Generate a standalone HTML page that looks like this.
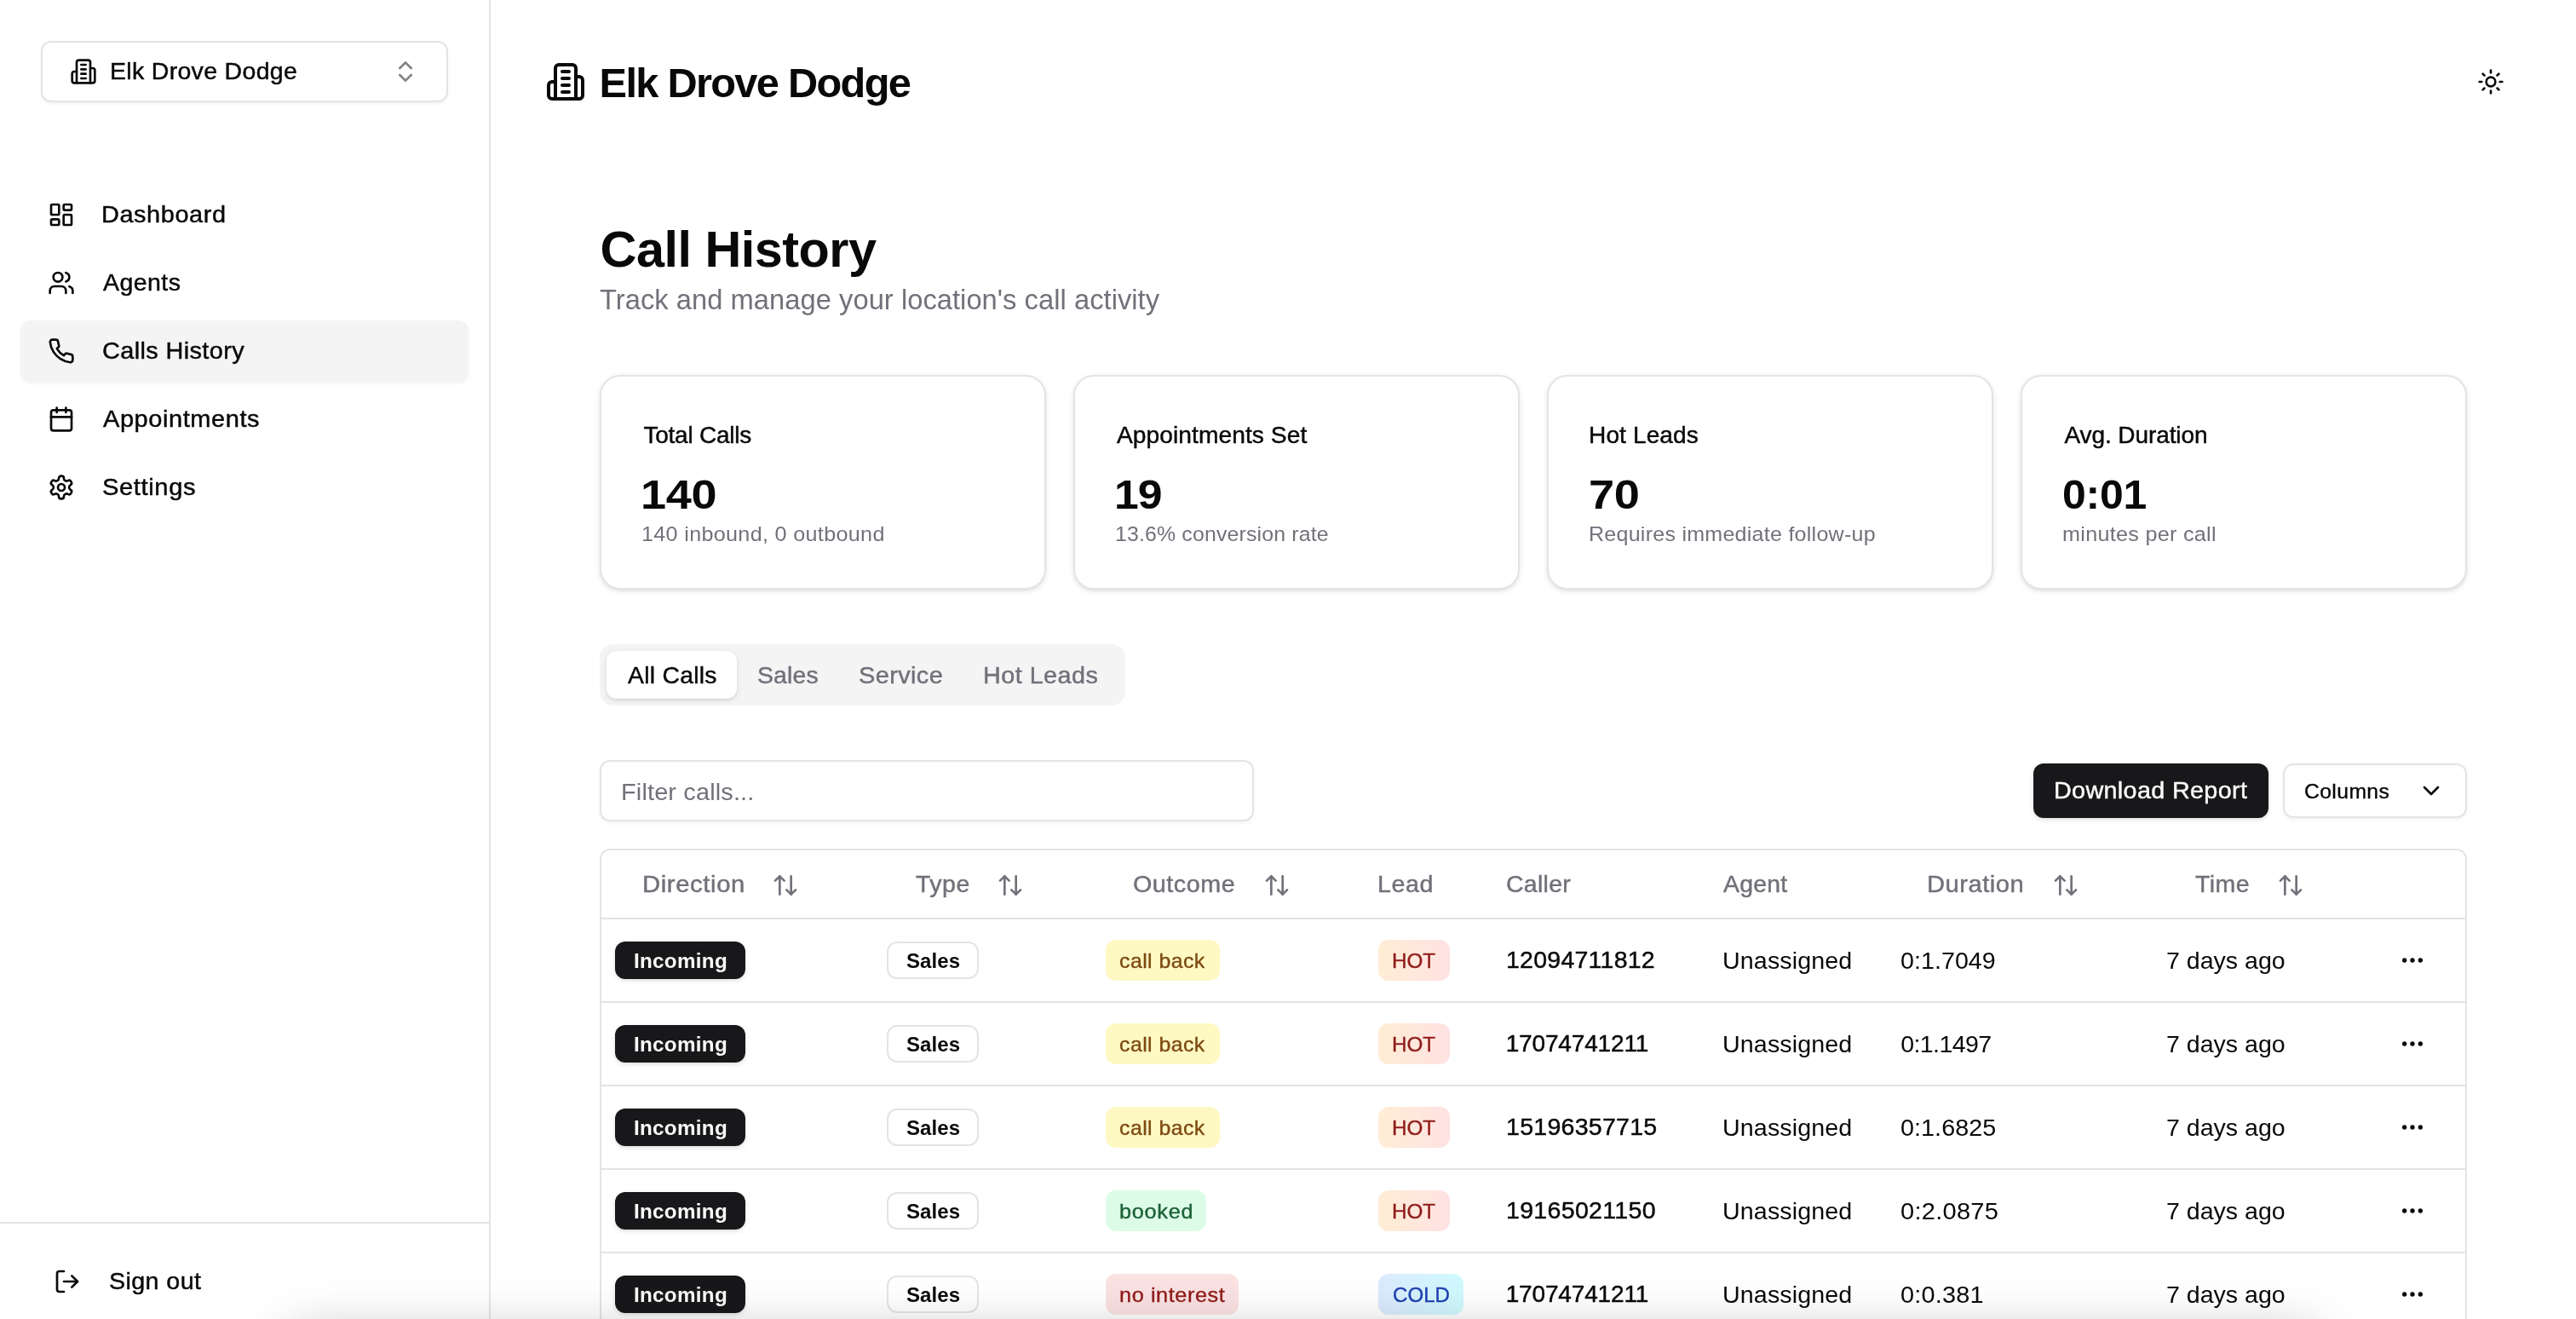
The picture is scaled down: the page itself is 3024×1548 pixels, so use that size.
<!DOCTYPE html>
<html lang="en"><head><meta charset="utf-8"><title>Call History - Elk Drove Dodge</title>
<style>
html,body{margin:0;padding:0;}
body{width:3024px;height:1548px;overflow:hidden;background:#fff;position:relative;
font-family:"Liberation Sans",sans-serif;color:#09090b;-webkit-font-smoothing:antialiased;}
.app{position:absolute;left:0;top:0;width:3024px;height:1548px;overflow:hidden;will-change:transform;}
.g{position:absolute;left:0;top:0;width:0;height:0;margin:0;padding:0;}
.bx{position:absolute;box-sizing:border-box;}
.t{position:absolute;white-space:nowrap;margin:0;padding:0;font-weight:400;font-family:"Liberation Sans",sans-serif;}
.ic{position:absolute;display:block;overflow:visible;}
</style></head><body><div class="app">
<aside class="g" aria-label="Sidebar">
<div class="bx" style="left:574px;top:0px;width:2px;height:1548px;background:#e4e4e7;"></div>
<div class="bx" style="left:48px;top:48px;width:478px;height:72px;border:2px solid #e4e4e7;border-radius:12px;background:#fff;box-shadow:0 2px 4px rgba(0,0,0,0.05);"></div>
<svg class="ic" style="left:82px;top:68px;width:32px;height:32px;color:#09090b;" viewBox="0 0 24 24" fill="none" stroke="currentColor" stroke-width="2" stroke-linecap="round" stroke-linejoin="round"><path d="M6 22V4a2 2 0 0 1 2-2h8a2 2 0 0 1 2 2v18Z"/><path d="M6 12H4a2 2 0 0 0-2 2v6a2 2 0 0 0 2 2h2"/><path d="M18 9h2a2 2 0 0 1 2 2v9a2 2 0 0 1-2 2h-2"/><path d="M10 6h4"/><path d="M10 10h4"/><path d="M10 14h4"/><path d="M10 18h4"/></svg>
<svg class="ic" style="left:460px;top:68px;width:32px;height:32px;color:#09090b;opacity:0.5;" viewBox="0 0 24 24" fill="none" stroke="currentColor" stroke-width="2" stroke-linecap="round" stroke-linejoin="round"><path d="m7 15 5 5 5-5"/><path d="m7 9 5-5 5 5"/></svg>
<div class="bx" style="left:24px;top:376px;width:526px;height:72px;background:#f4f4f5;border-radius:12px;box-shadow:0 2px 4px rgba(0,0,0,0.05);"></div>
<svg class="ic" style="left:56px;top:236px;width:32px;height:32px;color:#09090b;" viewBox="0 0 24 24" fill="none" stroke="currentColor" stroke-width="2" stroke-linecap="round" stroke-linejoin="round"><rect width="7" height="9" x="3" y="3" rx="1"/><rect width="7" height="5" x="14" y="3" rx="1"/><rect width="7" height="9" x="14" y="12" rx="1"/><rect width="7" height="5" x="3" y="16" rx="1"/></svg>
<svg class="ic" style="left:56px;top:316px;width:32px;height:32px;color:#09090b;" viewBox="0 0 24 24" fill="none" stroke="currentColor" stroke-width="2" stroke-linecap="round" stroke-linejoin="round"><path d="M16 21v-2a4 4 0 0 0-4-4H6a4 4 0 0 0-4 4v2"/><circle cx="9" cy="7" r="4"/><path d="M22 21v-2a4 4 0 0 0-3-3.87"/><path d="M16 3.13a4 4 0 0 1 0 7.75"/></svg>
<svg class="ic" style="left:56px;top:396px;width:32px;height:32px;color:#09090b;" viewBox="0 0 24 24" fill="none" stroke="currentColor" stroke-width="2" stroke-linecap="round" stroke-linejoin="round"><path d="M22 16.92v3a2 2 0 0 1-2.18 2 19.79 19.79 0 0 1-8.63-3.07 19.5 19.5 0 0 1-6-6 19.79 19.79 0 0 1-3.07-8.67A2 2 0 0 1 4.11 2h3a2 2 0 0 1 2 1.72 12.84 12.84 0 0 0 .7 2.81 2 2 0 0 1-.45 2.11L8.09 9.91a16 16 0 0 0 6 6l1.27-1.27a2 2 0 0 1 2.11-.45 12.84 12.84 0 0 0 2.81.7A2 2 0 0 1 22 16.92z"/></svg>
<svg class="ic" style="left:56px;top:476px;width:32px;height:32px;color:#09090b;" viewBox="0 0 24 24" fill="none" stroke="currentColor" stroke-width="2" stroke-linecap="round" stroke-linejoin="round"><path d="M8 2v4"/><path d="M16 2v4"/><rect width="18" height="18" x="3" y="4" rx="2"/><path d="M3 10h18"/></svg>
<svg class="ic" style="left:56px;top:556px;width:32px;height:32px;color:#09090b;" viewBox="0 0 24 24" fill="none" stroke="currentColor" stroke-width="2" stroke-linecap="round" stroke-linejoin="round"><path d="M12.22 2h-.44a2 2 0 0 0-2 2v.18a2 2 0 0 1-1 1.73l-.43.25a2 2 0 0 1-2 0l-.15-.08a2 2 0 0 0-2.73.73l-.22.38a2 2 0 0 0 .73 2.73l.15.1a2 2 0 0 1 1 1.72v.51a2 2 0 0 1-1 1.74l-.15.09a2 2 0 0 0-.73 2.73l.22.38a2 2 0 0 0 2.73.73l.15-.08a2 2 0 0 1 2 0l.43.25a2 2 0 0 1 1 1.73V20a2 2 0 0 0 2 2h.44a2 2 0 0 0 2-2v-.18a2 2 0 0 1 1-1.73l.43-.25a2 2 0 0 1 2 0l.15.08a2 2 0 0 0 2.73-.73l.22-.39a2 2 0 0 0-.73-2.73l-.15-.08a2 2 0 0 1-1-1.74v-.5a2 2 0 0 1 1-1.74l.15-.09a2 2 0 0 0 .73-2.73l-.22-.38a2 2 0 0 0-2.73-.73l-.15.08a2 2 0 0 1-2 0l-.43-.25a2 2 0 0 1-1-1.73V4a2 2 0 0 0-2-2z"/><circle cx="12" cy="12" r="3"/></svg>
<div class="bx" style="left:0px;top:1434px;width:574px;height:2px;background:#e4e4e7;"></div>
<svg class="ic" style="left:63.40px;top:1488px;width:32px;height:32px;color:#09090b;" viewBox="0 0 24 24" fill="none" stroke="currentColor" stroke-width="2" stroke-linecap="round" stroke-linejoin="round"><path d="M9 21H5a2 2 0 0 1-2-2V5a2 2 0 0 1 2-2h4"/><polyline points="16 17 21 12 16 7"/><line x1="21" x2="9" y1="12" y2="12"/></svg>
<span class="t" style="left:128.80px;top:64.30px;line-height:40px;font-size:28px;color:#09090b;-webkit-text-stroke:0.45px currentColor;letter-spacing:0.309px;transform:scaleX(1.0177);transform-origin:0 50%;">Elk Drove Dodge</span>
<span class="t" style="left:118.80px;top:232.30px;line-height:40px;font-size:28px;color:#09090b;-webkit-text-stroke:0.45px currentColor;letter-spacing:0.557px;transform:scaleX(1.0321);transform-origin:0 50%;">Dashboard</span>
<span class="t" style="left:120.80px;top:312.30px;line-height:40px;font-size:28px;color:#09090b;-webkit-text-stroke:0.45px currentColor;letter-spacing:0.432px;transform:scaleX(1.0184);transform-origin:0 50%;">Agents</span>
<span class="t" style="left:119.80px;top:392.30px;line-height:40px;font-size:28px;color:#09090b;-webkit-text-stroke:0.45px currentColor;letter-spacing:0.372px;transform:scaleX(1.0308);transform-origin:0 50%;">Calls History</span>
<span class="t" style="left:120.80px;top:472.30px;line-height:40px;font-size:28px;color:#09090b;-webkit-text-stroke:0.45px currentColor;letter-spacing:0.544px;transform:scaleX(1.0357);transform-origin:0 50%;">Appointments</span>
<span class="t" style="left:119.80px;top:552.30px;line-height:40px;font-size:28px;color:#09090b;-webkit-text-stroke:0.45px currentColor;letter-spacing:0.576px;transform:scaleX(1.0410);transform-origin:0 50%;">Settings</span>
<span class="t" style="left:128.40px;top:1483.90px;line-height:40px;font-size:28px;color:#09090b;-webkit-text-stroke:0.45px currentColor;letter-spacing:0.391px;transform:scaleX(1.0235);transform-origin:0 50%;">Sign out</span>
</aside>
<header class="g">
<svg class="ic" style="left:640px;top:72px;width:48px;height:48px;color:#09090b;" viewBox="0 0 24 24" fill="none" stroke="currentColor" stroke-width="2" stroke-linecap="round" stroke-linejoin="round"><path d="M6 22V4a2 2 0 0 1 2-2h8a2 2 0 0 1 2 2v18Z"/><path d="M6 12H4a2 2 0 0 0-2 2v6a2 2 0 0 0 2 2h2"/><path d="M18 9h2a2 2 0 0 1 2 2v9a2 2 0 0 1-2 2h-2"/><path d="M10 6h4"/><path d="M10 10h4"/><path d="M10 14h4"/><path d="M10 18h4"/></svg>
<svg class="ic" style="left:2908px;top:80px;width:32px;height:32px;color:#09090b;" viewBox="0 0 24 24" fill="none" stroke="currentColor" stroke-width="2" stroke-linecap="round" stroke-linejoin="round"><circle cx="12" cy="12" r="4"/><path d="M12 2v2"/><path d="M12 20v2"/><path d="m4.93 4.93 1.41 1.41"/><path d="m17.66 17.66 1.41 1.41"/><path d="M2 12h2"/><path d="M20 12h2"/><path d="m6.34 17.66-1.41 1.41"/><path d="m19.07 4.93-1.41 1.41"/></svg>
<h1 class="t" style="left:703.60px;top:62.92px;line-height:68px;font-size:48.72px;color:#09090b;font-weight:700;letter-spacing:-1.686px;">Elk Drove Dodge</h1>
</header>
<section class="g" aria-label="Page title">
<h2 class="t" style="left:704.50px;top:250.62px;line-height:84px;font-size:59.40px;color:#09090b;font-weight:700;letter-spacing:-0.509px;">Call History</h2>
<p class="t" style="left:704.10px;top:329.49px;line-height:46px;font-size:32.64px;color:#71717a;letter-spacing:0.035px;transform:scaleX(1.0020);transform-origin:0 50%;">Track and manage your location's call activity</p>
</section>
<section class="g" aria-label="Statistics">
<div class="bx" style="left:704px;top:440px;width:524px;height:252px;border:2px solid #e4e4e7;border-radius:24px;background:#fff;box-shadow:0 2px 6px rgba(0,0,0,0.1),0 2px 4px -2px rgba(0,0,0,0.1);"></div>
<div class="bx" style="left:1260px;top:440px;width:524px;height:252px;border:2px solid #e4e4e7;border-radius:24px;background:#fff;box-shadow:0 2px 6px rgba(0,0,0,0.1),0 2px 4px -2px rgba(0,0,0,0.1);"></div>
<div class="bx" style="left:1816px;top:440px;width:524px;height:252px;border:2px solid #e4e4e7;border-radius:24px;background:#fff;box-shadow:0 2px 6px rgba(0,0,0,0.1),0 2px 4px -2px rgba(0,0,0,0.1);"></div>
<div class="bx" style="left:2372px;top:440px;width:524px;height:252px;border:2px solid #e4e4e7;border-radius:24px;background:#fff;box-shadow:0 2px 6px rgba(0,0,0,0.1),0 2px 4px -2px rgba(0,0,0,0.1);"></div>
<span class="t" style="left:755.40px;top:490.90px;line-height:40px;font-size:28px;color:#09090b;-webkit-text-stroke:0.45px currentColor;letter-spacing:-0.220px;">Total Calls</span>
<span class="t" style="left:752.40px;top:545.62px;line-height:68px;font-size:48.72px;color:#09090b;font-weight:700;letter-spacing:-0.270px;transform:scaleX(1.1105);transform-origin:0 50%;">140</span>
<span class="t" style="left:753.40px;top:609.72px;line-height:34px;font-size:24.48px;color:#71717a;letter-spacing:0.309px;transform:scaleX(1.0281);transform-origin:0 50%;">140 inbound, 0 outbound</span>
<span class="t" style="left:1311.40px;top:490.90px;line-height:40px;font-size:28px;color:#09090b;-webkit-text-stroke:0.45px currentColor;letter-spacing:0.053px;transform:scaleX(1.0063);transform-origin:0 50%;">Appointments Set</span>
<span class="t" style="left:1308.40px;top:545.62px;line-height:68px;font-size:48.72px;color:#09090b;font-weight:700;letter-spacing:-0.942px;transform:scaleX(1.0612);transform-origin:0 50%;">19</span>
<span class="t" style="left:1309.40px;top:609.72px;line-height:34px;font-size:24.48px;color:#71717a;letter-spacing:0.167px;transform:scaleX(1.0154);transform-origin:0 50%;">13.6% conversion rate</span>
<span class="t" style="left:1865.40px;top:490.90px;line-height:40px;font-size:28px;color:#09090b;-webkit-text-stroke:0.45px currentColor;letter-spacing:0.100px;transform:scaleX(1.0032);transform-origin:0 50%;">Hot Leads</span>
<span class="t" style="left:1865.40px;top:545.62px;line-height:68px;font-size:48.72px;color:#09090b;font-weight:700;letter-spacing:-0.360px;transform:scaleX(1.1120);transform-origin:0 50%;">70</span>
<span class="t" style="left:1865.40px;top:609.72px;line-height:34px;font-size:24.48px;color:#71717a;letter-spacing:0.246px;transform:scaleX(1.0232);transform-origin:0 50%;">Requires immediate follow-up</span>
<span class="t" style="left:2423.40px;top:490.90px;line-height:40px;font-size:28px;color:#09090b;-webkit-text-stroke:0.45px currentColor;letter-spacing:-0.083px;">Avg. Duration</span>
<span class="t" style="left:2421.40px;top:545.62px;line-height:68px;font-size:48.72px;color:#09090b;font-weight:700;letter-spacing:-0.195px;transform:scaleX(1.0255);transform-origin:0 50%;">0:01</span>
<span class="t" style="left:2421.40px;top:609.72px;line-height:34px;font-size:24.48px;color:#71717a;letter-spacing:0.285px;transform:scaleX(1.0280);transform-origin:0 50%;">minutes per call</span>
</section>
<nav class="g" aria-label="Call filters" role="tablist">
<div class="bx" style="left:704px;top:756px;width:617px;height:72px;background:#f4f4f5;border-radius:16px;"></div>
<div class="bx" style="left:712px;top:764px;width:153px;height:56px;background:#fff;border-radius:12px;box-shadow:0 2px 6px rgba(0,0,0,0.1),0 2px 4px -2px rgba(0,0,0,0.1);"></div>
<span class="t" style="left:736.60px;top:772.70px;line-height:40px;font-size:28px;color:#09090b;-webkit-text-stroke:0.45px currentColor;letter-spacing:0.272px;transform:scaleX(1.0109);transform-origin:0 50%;">All Calls</span>
<span class="t" style="left:889.10px;top:772.70px;line-height:40px;font-size:28px;color:#71717a;-webkit-text-stroke:0.45px currentColor;letter-spacing:0.197px;transform:scaleX(1.0132);transform-origin:0 50%;">Sales</span>
<span class="t" style="left:1008.20px;top:772.70px;line-height:40px;font-size:28px;color:#71717a;-webkit-text-stroke:0.45px currentColor;letter-spacing:0.355px;transform:scaleX(1.0341);transform-origin:0 50%;">Service</span>
<span class="t" style="left:1154.30px;top:772.70px;line-height:40px;font-size:28px;color:#71717a;-webkit-text-stroke:0.45px currentColor;letter-spacing:0.462px;transform:scaleX(1.0272);transform-origin:0 50%;">Hot Leads</span>
</nav>
<section class="g" aria-label="Table toolbar">
<div class="bx" style="left:704px;top:892px;width:768px;height:72px;border:2px solid #e4e4e7;border-radius:12px;background:#fff;box-shadow:0 2px 4px rgba(0,0,0,0.05);"></div>
<div class="bx" style="left:2387px;top:896px;width:276px;height:64px;background:#18181b;border-radius:12px;box-shadow:0 2px 6px rgba(0,0,0,0.1),0 2px 4px -2px rgba(0,0,0,0.1);"></div>
<div class="bx" style="left:2680px;top:896px;width:216px;height:64px;border:2px solid #e4e4e7;border-radius:12px;background:#fff;box-shadow:0 2px 4px rgba(0,0,0,0.05);"></div>
<svg class="ic" style="left:2838px;top:912px;width:32px;height:32px;color:#09090b;" viewBox="0 0 24 24" fill="none" stroke="currentColor" stroke-width="2" stroke-linecap="round" stroke-linejoin="round"><path d="m6 9 6 6 6-6"/></svg>
<span class="t" style="left:728.80px;top:908.50px;line-height:40px;font-size:28.56px;color:#71717a;letter-spacing:0.141px;transform:scaleX(1.0135);transform-origin:0 50%;">Filter calls...</span>
<span class="t" style="left:2410.80px;top:908.30px;line-height:40px;font-size:28px;color:#fafafa;-webkit-text-stroke:0.45px currentColor;letter-spacing:0.348px;transform:scaleX(1.0257);transform-origin:0 50%;">Download Report</span>
<span class="t" style="left:2705px;top:912.48px;line-height:34px;font-size:24px;color:#09090b;-webkit-text-stroke:0.38px currentColor;letter-spacing:0.389px;transform:scaleX(1.0290);transform-origin:0 50%;">Columns</span>
</section>
<section class="g" aria-label="Calls table" role="table">
<div class="bx" style="left:704px;top:996px;width:2192px;height:600px;border:2px solid #e4e4e7;border-radius:12px;background:#fff;"></div>
<div class="bx" style="left:706px;top:1077px;width:2188px;height:2px;background:#e4e4e7;"></div>
<div class="bx" style="left:706px;top:1175px;width:2188px;height:2px;background:#e4e4e7;"></div>
<div class="bx" style="left:706px;top:1273px;width:2188px;height:2px;background:#e4e4e7;"></div>
<div class="bx" style="left:706px;top:1371px;width:2188px;height:2px;background:#e4e4e7;"></div>
<div class="bx" style="left:706px;top:1469px;width:2188px;height:2px;background:#e4e4e7;"></div>
<svg class="ic" style="left:905.60px;top:1022.60px;width:32px;height:32px;color:#71717a;" viewBox="0 0 24 24" fill="none" stroke="currentColor" stroke-width="2" stroke-linecap="round" stroke-linejoin="round"><path d="m21 16-4 4-4-4"/><path d="M17 20V4"/><path d="m3 8 4-4 4 4"/><path d="M7 4v16"/></svg>
<svg class="ic" style="left:1170.40px;top:1022.60px;width:32px;height:32px;color:#71717a;" viewBox="0 0 24 24" fill="none" stroke="currentColor" stroke-width="2" stroke-linecap="round" stroke-linejoin="round"><path d="m21 16-4 4-4-4"/><path d="M17 20V4"/><path d="m3 8 4-4 4 4"/><path d="M7 4v16"/></svg>
<svg class="ic" style="left:1482.80px;top:1022.60px;width:32px;height:32px;color:#71717a;" viewBox="0 0 24 24" fill="none" stroke="currentColor" stroke-width="2" stroke-linecap="round" stroke-linejoin="round"><path d="m21 16-4 4-4-4"/><path d="M17 20V4"/><path d="m3 8 4-4 4 4"/><path d="M7 4v16"/></svg>
<svg class="ic" style="left:2409.20px;top:1022.60px;width:32px;height:32px;color:#71717a;" viewBox="0 0 24 24" fill="none" stroke="currentColor" stroke-width="2" stroke-linecap="round" stroke-linejoin="round"><path d="m21 16-4 4-4-4"/><path d="M17 20V4"/><path d="m3 8 4-4 4 4"/><path d="M7 4v16"/></svg>
<svg class="ic" style="left:2672.80px;top:1022.60px;width:32px;height:32px;color:#71717a;" viewBox="0 0 24 24" fill="none" stroke="currentColor" stroke-width="2" stroke-linecap="round" stroke-linejoin="round"><path d="m21 16-4 4-4-4"/><path d="M17 20V4"/><path d="m3 8 4-4 4 4"/><path d="M7 4v16"/></svg>
<div class="bx" style="left:722px;top:1105px;width:153px;height:44px;background:#18181b;border-radius:12px;box-shadow:0 2px 6px rgba(0,0,0,0.1),0 2px 4px -2px rgba(0,0,0,0.1);"></div>
<div class="bx" style="left:1041px;top:1105px;width:107.60px;height:44px;border:2px solid #e4e4e7;border-radius:12px;background:#fff;"></div>
<div class="bx" style="left:1298px;top:1103px;width:134px;height:48px;background:#fef9c3;border-radius:12px;"></div>
<div class="bx" style="left:1617.60px;top:1103px;width:84.60px;height:48px;background:linear-gradient(90deg,#ffedd5,#fee2e2);border-radius:12px;"></div>
<svg class="ic" style="left:2816px;top:1111px;width:32px;height:32px;color:#09090b;" viewBox="0 0 24 24" fill="none" stroke="currentColor" stroke-width="2" stroke-linecap="round" stroke-linejoin="round"><circle cx="12" cy="12" r="1"/><circle cx="19" cy="12" r="1"/><circle cx="5" cy="12" r="1"/></svg>
<div class="bx" style="left:722px;top:1203px;width:153px;height:44px;background:#18181b;border-radius:12px;box-shadow:0 2px 6px rgba(0,0,0,0.1),0 2px 4px -2px rgba(0,0,0,0.1);"></div>
<div class="bx" style="left:1041px;top:1203px;width:107.60px;height:44px;border:2px solid #e4e4e7;border-radius:12px;background:#fff;"></div>
<div class="bx" style="left:1298px;top:1201px;width:134px;height:48px;background:#fef9c3;border-radius:12px;"></div>
<div class="bx" style="left:1617.60px;top:1201px;width:84.60px;height:48px;background:linear-gradient(90deg,#ffedd5,#fee2e2);border-radius:12px;"></div>
<svg class="ic" style="left:2816px;top:1209px;width:32px;height:32px;color:#09090b;" viewBox="0 0 24 24" fill="none" stroke="currentColor" stroke-width="2" stroke-linecap="round" stroke-linejoin="round"><circle cx="12" cy="12" r="1"/><circle cx="19" cy="12" r="1"/><circle cx="5" cy="12" r="1"/></svg>
<div class="bx" style="left:722px;top:1301px;width:153px;height:44px;background:#18181b;border-radius:12px;box-shadow:0 2px 6px rgba(0,0,0,0.1),0 2px 4px -2px rgba(0,0,0,0.1);"></div>
<div class="bx" style="left:1041px;top:1301px;width:107.60px;height:44px;border:2px solid #e4e4e7;border-radius:12px;background:#fff;"></div>
<div class="bx" style="left:1298px;top:1299px;width:134px;height:48px;background:#fef9c3;border-radius:12px;"></div>
<div class="bx" style="left:1617.60px;top:1299px;width:84.60px;height:48px;background:linear-gradient(90deg,#ffedd5,#fee2e2);border-radius:12px;"></div>
<svg class="ic" style="left:2816px;top:1307px;width:32px;height:32px;color:#09090b;" viewBox="0 0 24 24" fill="none" stroke="currentColor" stroke-width="2" stroke-linecap="round" stroke-linejoin="round"><circle cx="12" cy="12" r="1"/><circle cx="19" cy="12" r="1"/><circle cx="5" cy="12" r="1"/></svg>
<div class="bx" style="left:722px;top:1399px;width:153px;height:44px;background:#18181b;border-radius:12px;box-shadow:0 2px 6px rgba(0,0,0,0.1),0 2px 4px -2px rgba(0,0,0,0.1);"></div>
<div class="bx" style="left:1041px;top:1399px;width:107.60px;height:44px;border:2px solid #e4e4e7;border-radius:12px;background:#fff;"></div>
<div class="bx" style="left:1298px;top:1397px;width:118px;height:48px;background:#dcfce7;border-radius:12px;"></div>
<div class="bx" style="left:1617.60px;top:1397px;width:84.60px;height:48px;background:linear-gradient(90deg,#ffedd5,#fee2e2);border-radius:12px;"></div>
<svg class="ic" style="left:2816px;top:1405px;width:32px;height:32px;color:#09090b;" viewBox="0 0 24 24" fill="none" stroke="currentColor" stroke-width="2" stroke-linecap="round" stroke-linejoin="round"><circle cx="12" cy="12" r="1"/><circle cx="19" cy="12" r="1"/><circle cx="5" cy="12" r="1"/></svg>
<div class="bx" style="left:722px;top:1497px;width:153px;height:44px;background:#18181b;border-radius:12px;box-shadow:0 2px 6px rgba(0,0,0,0.1),0 2px 4px -2px rgba(0,0,0,0.1);"></div>
<div class="bx" style="left:1041px;top:1497px;width:107.60px;height:44px;border:2px solid #e4e4e7;border-radius:12px;background:#fff;"></div>
<div class="bx" style="left:1298px;top:1495px;width:156.20px;height:48px;background:#fbe2e2;border-radius:12px;"></div>
<div class="bx" style="left:1617.60px;top:1495px;width:100.40px;height:48px;background:linear-gradient(90deg,#dbeafe,#cffafe);border-radius:12px;"></div>
<svg class="ic" style="left:2816px;top:1503px;width:32px;height:32px;color:#09090b;" viewBox="0 0 24 24" fill="none" stroke="currentColor" stroke-width="2" stroke-linecap="round" stroke-linejoin="round"><circle cx="12" cy="12" r="1"/><circle cx="19" cy="12" r="1"/><circle cx="5" cy="12" r="1"/></svg>
<span class="t" style="left:753.60px;top:1018.30px;line-height:40px;font-size:28px;color:#71717a;-webkit-text-stroke:0.45px currentColor;letter-spacing:0.574px;transform:scaleX(1.0458);transform-origin:0 50%;">Direction</span>
<span class="t" style="left:1075.10px;top:1018.30px;line-height:40px;font-size:28px;color:#71717a;-webkit-text-stroke:0.45px currentColor;letter-spacing:0.458px;transform:scaleX(1.0200);transform-origin:0 50%;">Type</span>
<span class="t" style="left:1330px;top:1018.30px;line-height:40px;font-size:28px;color:#71717a;-webkit-text-stroke:0.45px currentColor;letter-spacing:0.487px;transform:scaleX(1.0268);transform-origin:0 50%;">Outcome</span>
<span class="t" style="left:1616.80px;top:1018.30px;line-height:40px;font-size:28px;color:#71717a;-webkit-text-stroke:0.45px currentColor;letter-spacing:0.586px;transform:scaleX(1.0237);transform-origin:0 50%;">Lead</span>
<span class="t" style="left:1768.40px;top:1018.30px;line-height:40px;font-size:28px;color:#71717a;-webkit-text-stroke:0.45px currentColor;letter-spacing:0.275px;transform:scaleX(1.0167);transform-origin:0 50%;">Caller</span>
<span class="t" style="left:2023px;top:1018.30px;line-height:40px;font-size:28px;color:#71717a;-webkit-text-stroke:0.45px currentColor;letter-spacing:0.247px;transform:scaleX(1.0137);transform-origin:0 50%;">Agent</span>
<span class="t" style="left:2262.40px;top:1018.30px;line-height:40px;font-size:28px;color:#71717a;-webkit-text-stroke:0.45px currentColor;letter-spacing:0.467px;transform:scaleX(1.0412);transform-origin:0 50%;">Duration</span>
<span class="t" style="left:2576.80px;top:1018.30px;line-height:40px;font-size:28px;color:#71717a;-webkit-text-stroke:0.45px currentColor;letter-spacing:0.393px;transform:scaleX(1.0183);transform-origin:0 50%;">Time</span>
<span class="t" style="left:743.60px;top:1110.68px;line-height:34px;font-size:24px;color:#fafafa;font-weight:700;letter-spacing:0.283px;transform:scaleX(1.0096);transform-origin:0 50%;">Incoming</span>
<span class="t" style="left:1063.50px;top:1110.68px;line-height:34px;font-size:24px;color:#09090b;font-weight:700;letter-spacing:0.050px;transform:scaleX(1.0016);transform-origin:0 50%;">Sales</span>
<span class="t" style="left:1313.80px;top:1111.08px;line-height:34px;font-size:24px;color:#7e4a12;-webkit-text-stroke:0.38px currentColor;letter-spacing:0.435px;transform:scaleX(1.0355);transform-origin:0 50%;">call back</span>
<span class="t" style="left:1633.70px;top:1111.08px;line-height:34px;font-size:24px;color:#8f1c1a;-webkit-text-stroke:0.38px currentColor;transform:scaleX(1.0104);transform-origin:0 50%;">HOT</span>
<span class="t" style="left:1767.70px;top:1107.30px;line-height:40px;font-size:28px;color:#09090b;-webkit-text-stroke:0.45px currentColor;letter-spacing:0.256px;transform:scaleX(1.0169);transform-origin:0 50%;">12094711812</span>
<span class="t" style="left:2021.80px;top:1106.70px;line-height:40px;font-size:28.56px;color:#09090b;letter-spacing:0.111px;transform:scaleX(1.0034);transform-origin:0 50%;">Unassigned</span>
<span class="t" style="left:2231.20px;top:1106.70px;line-height:40px;font-size:28.56px;color:#09090b;letter-spacing:0.057px;transform:scaleX(1.0018);transform-origin:0 50%;">0:1.7049</span>
<span class="t" style="left:2543px;top:1106.70px;line-height:40px;font-size:28.56px;color:#09090b;">7 days ago</span>
<span class="t" style="left:743.60px;top:1208.68px;line-height:34px;font-size:24px;color:#fafafa;font-weight:700;letter-spacing:0.283px;transform:scaleX(1.0096);transform-origin:0 50%;">Incoming</span>
<span class="t" style="left:1063.50px;top:1208.68px;line-height:34px;font-size:24px;color:#09090b;font-weight:700;letter-spacing:0.050px;transform:scaleX(1.0016);transform-origin:0 50%;">Sales</span>
<span class="t" style="left:1313.80px;top:1209.08px;line-height:34px;font-size:24px;color:#7e4a12;-webkit-text-stroke:0.38px currentColor;letter-spacing:0.435px;transform:scaleX(1.0355);transform-origin:0 50%;">call back</span>
<span class="t" style="left:1633.70px;top:1209.08px;line-height:34px;font-size:24px;color:#8f1c1a;-webkit-text-stroke:0.38px currentColor;transform:scaleX(1.0104);transform-origin:0 50%;">HOT</span>
<span class="t" style="left:1767.70px;top:1205.30px;line-height:40px;font-size:28px;color:#09090b;-webkit-text-stroke:0.45px currentColor;letter-spacing:-0.160px;">17074741211</span>
<span class="t" style="left:2021.80px;top:1204.70px;line-height:40px;font-size:28.56px;color:#09090b;letter-spacing:0.111px;transform:scaleX(1.0034);transform-origin:0 50%;">Unassigned</span>
<span class="t" style="left:2231.20px;top:1204.70px;line-height:40px;font-size:28.56px;color:#09090b;letter-spacing:-0.600px;">0:1.1497</span>
<span class="t" style="left:2543px;top:1204.70px;line-height:40px;font-size:28.56px;color:#09090b;">7 days ago</span>
<span class="t" style="left:743.60px;top:1306.68px;line-height:34px;font-size:24px;color:#fafafa;font-weight:700;letter-spacing:0.283px;transform:scaleX(1.0096);transform-origin:0 50%;">Incoming</span>
<span class="t" style="left:1063.50px;top:1306.68px;line-height:34px;font-size:24px;color:#09090b;font-weight:700;letter-spacing:0.050px;transform:scaleX(1.0016);transform-origin:0 50%;">Sales</span>
<span class="t" style="left:1313.80px;top:1307.08px;line-height:34px;font-size:24px;color:#7e4a12;-webkit-text-stroke:0.38px currentColor;letter-spacing:0.435px;transform:scaleX(1.0355);transform-origin:0 50%;">call back</span>
<span class="t" style="left:1633.70px;top:1307.08px;line-height:34px;font-size:24px;color:#8f1c1a;-webkit-text-stroke:0.38px currentColor;transform:scaleX(1.0104);transform-origin:0 50%;">HOT</span>
<span class="t" style="left:1767.70px;top:1303.30px;line-height:40px;font-size:28px;color:#09090b;-webkit-text-stroke:0.45px currentColor;letter-spacing:0.255px;transform:scaleX(1.0196);transform-origin:0 50%;">15196357715</span>
<span class="t" style="left:2021.80px;top:1302.70px;line-height:40px;font-size:28.56px;color:#09090b;letter-spacing:0.111px;transform:scaleX(1.0034);transform-origin:0 50%;">Unassigned</span>
<span class="t" style="left:2231.20px;top:1302.70px;line-height:40px;font-size:28.56px;color:#09090b;letter-spacing:0.057px;transform:scaleX(1.0064);transform-origin:0 50%;">0:1.6825</span>
<span class="t" style="left:2543px;top:1302.70px;line-height:40px;font-size:28.56px;color:#09090b;">7 days ago</span>
<span class="t" style="left:743.60px;top:1404.68px;line-height:34px;font-size:24px;color:#fafafa;font-weight:700;letter-spacing:0.283px;transform:scaleX(1.0096);transform-origin:0 50%;">Incoming</span>
<span class="t" style="left:1063.50px;top:1404.68px;line-height:34px;font-size:24px;color:#09090b;font-weight:700;letter-spacing:0.050px;transform:scaleX(1.0016);transform-origin:0 50%;">Sales</span>
<span class="t" style="left:1313.80px;top:1405.08px;line-height:34px;font-size:24px;color:#1d6136;-webkit-text-stroke:0.38px currentColor;letter-spacing:0.723px;transform:scaleX(1.0506);transform-origin:0 50%;">booked</span>
<span class="t" style="left:1633.70px;top:1405.08px;line-height:34px;font-size:24px;color:#8f1c1a;-webkit-text-stroke:0.38px currentColor;transform:scaleX(1.0104);transform-origin:0 50%;">HOT</span>
<span class="t" style="left:1767.70px;top:1401.30px;line-height:40px;font-size:28px;color:#09090b;-webkit-text-stroke:0.45px currentColor;letter-spacing:0.314px;transform:scaleX(1.0186);transform-origin:0 50%;">19165021150</span>
<span class="t" style="left:2021.80px;top:1400.70px;line-height:40px;font-size:28.56px;color:#09090b;letter-spacing:0.111px;transform:scaleX(1.0034);transform-origin:0 50%;">Unassigned</span>
<span class="t" style="left:2231.20px;top:1400.70px;line-height:40px;font-size:28.56px;color:#09090b;letter-spacing:0.253px;transform:scaleX(1.0174);transform-origin:0 50%;">0:2.0875</span>
<span class="t" style="left:2543px;top:1400.70px;line-height:40px;font-size:28.56px;color:#09090b;">7 days ago</span>
<span class="t" style="left:743.60px;top:1502.68px;line-height:34px;font-size:24px;color:#fafafa;font-weight:700;letter-spacing:0.283px;transform:scaleX(1.0096);transform-origin:0 50%;">Incoming</span>
<span class="t" style="left:1063.50px;top:1502.68px;line-height:34px;font-size:24px;color:#09090b;font-weight:700;letter-spacing:0.050px;transform:scaleX(1.0016);transform-origin:0 50%;">Sales</span>
<span class="t" style="left:1313.80px;top:1503.08px;line-height:34px;font-size:24px;color:#8f1c1a;-webkit-text-stroke:0.38px currentColor;letter-spacing:0.551px;transform:scaleX(1.0532);transform-origin:0 50%;">no interest</span>
<span class="t" style="left:1634.70px;top:1503.08px;line-height:34px;font-size:24px;color:#1e40af;-webkit-text-stroke:0.38px currentColor;letter-spacing:0.067px;transform:scaleX(1.0015);transform-origin:0 50%;">COLD</span>
<span class="t" style="left:1767.70px;top:1499.30px;line-height:40px;font-size:28px;color:#09090b;-webkit-text-stroke:0.45px currentColor;letter-spacing:-0.160px;">17074741211</span>
<span class="t" style="left:2021.80px;top:1498.70px;line-height:40px;font-size:28.56px;color:#09090b;letter-spacing:0.111px;transform:scaleX(1.0034);transform-origin:0 50%;">Unassigned</span>
<span class="t" style="left:2231.20px;top:1498.70px;line-height:40px;font-size:28.56px;color:#09090b;letter-spacing:0.198px;transform:scaleX(1.0118);transform-origin:0 50%;">0:0.381</span>
<span class="t" style="left:2543px;top:1498.70px;line-height:40px;font-size:28.56px;color:#09090b;">7 days ago</span>
</section>
<div class="bx" style="left:330px;top:1564px;width:2400px;height:120px;border-radius:40px;background:#000;box-shadow:0 0 60px 0 rgba(0,0,0,0.26);pointer-events:none;"></div>
</div></body></html>
